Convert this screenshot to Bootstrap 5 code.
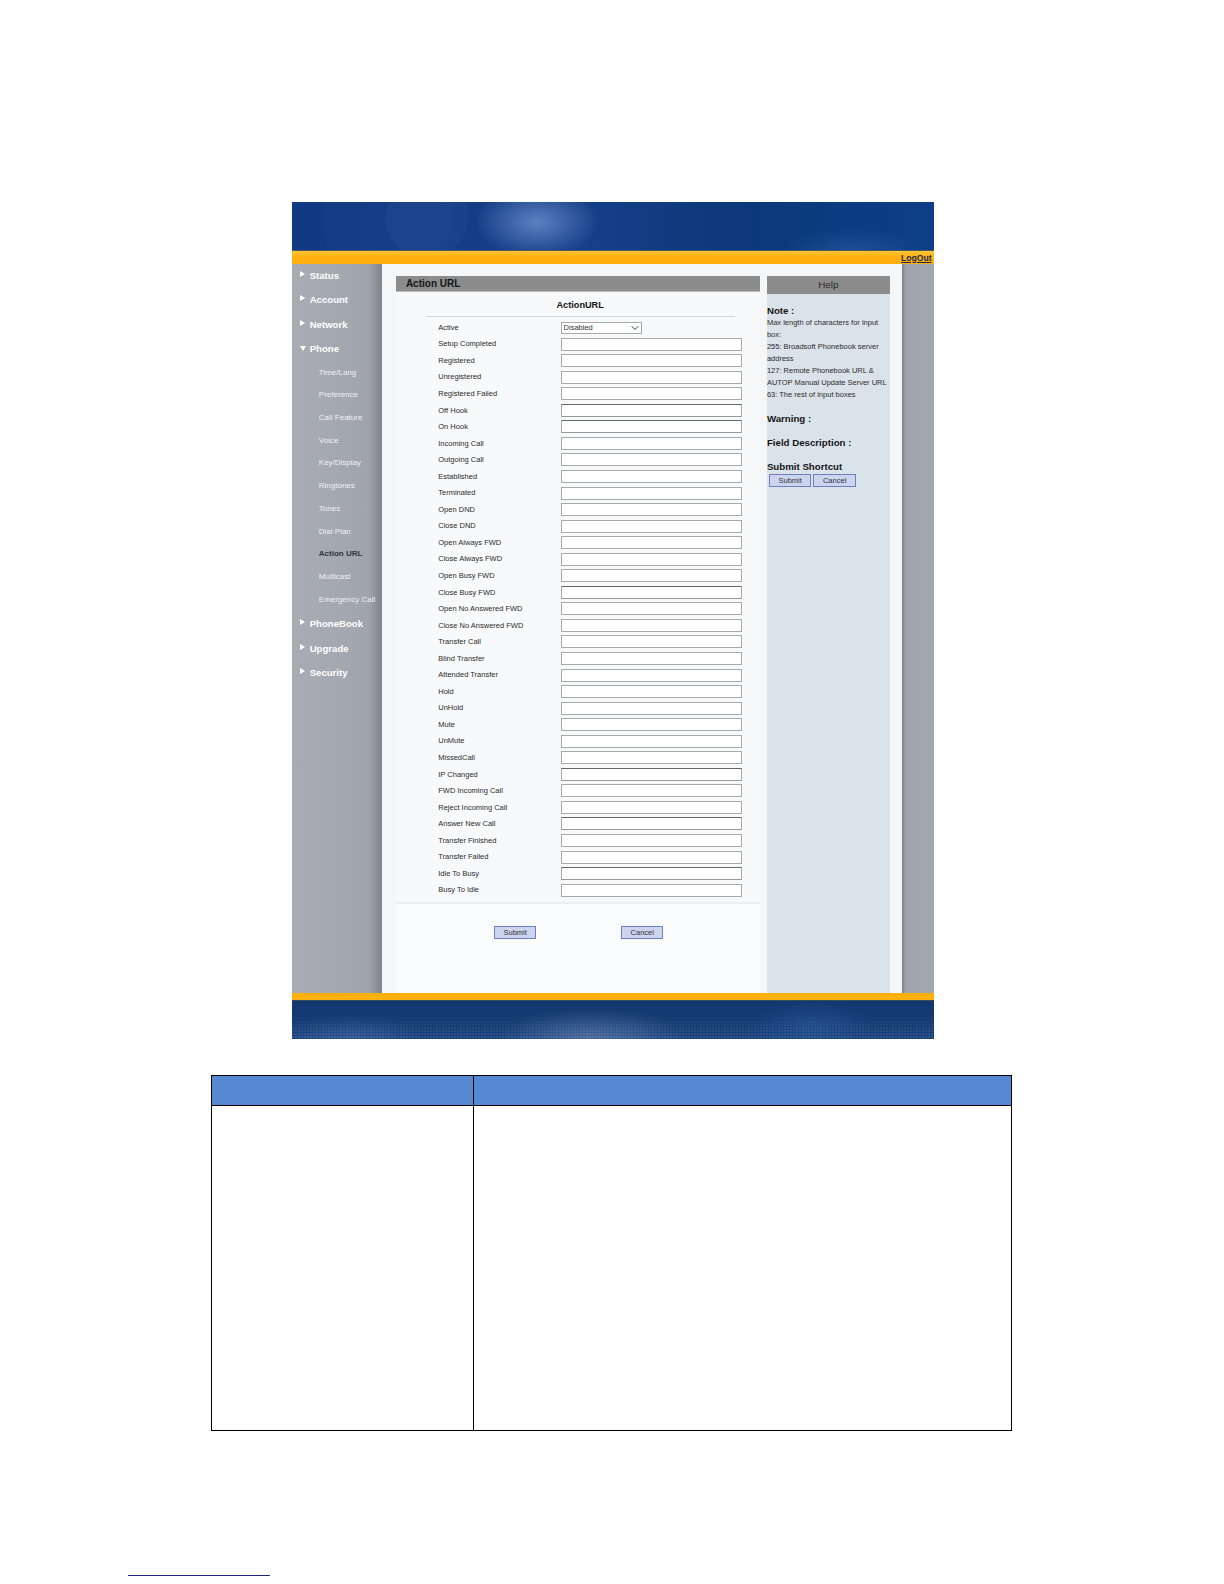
<!DOCTYPE html>
<html lang="en"><head><meta charset="utf-8"><title>Action URL</title>
<link href="https://cdn.jsdelivr.net/npm/bootstrap@5.3.0/dist/css/bootstrap.min.css" rel="stylesheet">
<style>
html,body{height:1584px;background:#fff;overflow:hidden}
.sheet{padding:202px 0 0 291.5px;height:1075px}
.frame{width:642px;height:837px;display:flex;flex-direction:column;font-family:"Liberation Sans",sans-serif;font-size:7.5px;color:#2c2c2c}
.banner{height:48px;flex:none;background:
 radial-gradient(ellipse 62px 36px at 245px 20px,rgba(130,165,225,.65),transparent),
 radial-gradient(circle 42px at 135px 15px,rgba(90,125,190,.08) 97%,transparent),
 radial-gradient(circle 66px at 95px 15px,rgba(50,90,160,.08) 97%,transparent),
 radial-gradient(ellipse 70px 22px at 560px 48px,rgba(70,120,190,.3),transparent),
 linear-gradient(90deg,#123a82,#163f88 45%,#0b3879 72%,#0d3f88);}
.stripe{height:13.5px;flex:none;background:linear-gradient(#ffc53a,#fdb00e 45%);display:flex;justify-content:flex-end;align-items:flex-end;border-top:1px solid #4b5a62}
.stripe a{font:700 8.6px/12px "Liberation Sans",sans-serif;color:#1d2a52;text-decoration:underline;padding-right:2px}
.mid{height:729.5px;flex:none;display:flex}
.sidenav{width:90px;flex:none;padding-top:3px;background:linear-gradient(90deg,#a9adb3,#a0a5ac 85%,#7f8389)}
.sidenav div{position:relative;color:#fff;white-space:nowrap}
.topitem{height:24.55px;line-height:18px;padding-left:18.2px;font-weight:700;font-size:9.6px}
.subitem{height:22.7px;line-height:16.5px;padding-left:27.3px;font-size:8px;color:#eef0f2!important}
.subitem + .topitem{margin-top:1px}
.subitem.on{color:#2d3540!important;font-weight:700}
.tri{position:absolute;left:8px;top:4px;width:0;height:0;border-left:5px solid #fff;border-top:3px solid transparent;border-bottom:3px solid transparent}
.tri.down{left:8px;top:6px;border-top:5px solid #fff;border-left:3px solid transparent;border-right:3px solid transparent;border-bottom:0}
.work{width:520.5px;flex:none;background:#f4f6f8;display:flex;padding:12px 12px 0 14.4px;gap:6.5px}
.rail{width:31.5px;flex:none;background:linear-gradient(90deg,#7d8187,#a0a5ac 12%,#a3a7ae)}
.mainp{width:364.5px;flex:none;background:#fafbfc;display:flex;flex-direction:column}
.ttl{height:16.2px;flex:none;background:#8c8c8c;border-bottom:1px solid #bbb;font-weight:700;font-size:10px;line-height:16px;padding-left:10px;color:#151515}
.formbox{height:612px;flex:none;border-bottom:2px solid #eceef0;background:#f8f9fb;padding-top:6px}
.fhead{text-align:center;font-weight:700;font-size:9.2px;line-height:14px;color:#151515;height:19px;padding-right:1px;margin:0 25px 2.6px 30px;border-bottom:1px solid #d4d8dc}
.frow{height:16.55px;display:flex;align-items:center;padding-left:42.4px}
.frow label{width:122.3px;flex:none;line-height:1}
.frow input{width:181px;height:13px;border:1px solid #a9a9a9;background:#fff;padding:0;border-radius:0;min-height:0;flex:none}
.frow input.dk{border-color:#666 #a9a9a9 #999}
.frow select{width:81px;height:12px;min-height:0;border:1px solid #a9a9a9;border-radius:0;font-size:7.5px;line-height:10px;padding:0 0 0 2px;background-size:10px 8px;background-position:right 1px center;color:#333;font-family:inherit}
.actions{display:flex;padding:22.2px 0 0 98px;gap:84.6px}
.pbtn{width:42.5px;height:13px;padding:0;border:1px solid #6f7fc0;border-radius:0;background:#ccd4f0;font-size:7.5px;line-height:11px;color:#333;font-family:inherit}
.helpp{width:123px;flex:none;background:#dbe3ea;line-height:12px;font-size:7.5px}
.helph{height:18.2px;background:#8c8c8c;text-align:center;font-size:9.9px;line-height:18px;color:#2a2a2a;margin-bottom:11px}
.helpp h6{font:700 9.7px/12px "Liberation Sans",sans-serif;margin:0;color:#151515}
.helpp p{margin:0 0 12px;white-space:nowrap}
.hgap{margin-bottom:12px!important}
.hbtns{display:flex;gap:2px;padding-left:2px;margin-top:1px}
.band{height:7px;flex:none;background:#fdb00e}
.foot{height:39px;flex:none;position:relative;border-top:1px solid #3a4a5a;background:
 radial-gradient(ellipse 95px 32px at 300px 39px,rgba(150,170,210,.4),transparent),
 radial-gradient(ellipse 70px 25px at 60px 39px,rgba(90,130,190,.35),transparent),
 radial-gradient(ellipse 60px 28px at 520px 25px,rgba(60,110,180,.3),transparent),
 linear-gradient(#12376f,#17407a)}
.foot::after{content:"";position:absolute;inset:14px 0 0;background:radial-gradient(circle at 1px 1px,rgba(190,205,230,.22) .6px,transparent 1px) 0 0/3px 3px;-webkit-mask-image:linear-gradient(transparent,#000);mask-image:linear-gradient(transparent,#000)}
.spec{margin:0 0 0 211px;width:801px;height:356px;table-layout:fixed;border-collapse:collapse}
.spec td{border:1px solid #000;padding:0}
.spec .hrow td{height:30px;background:#558ad2}
.spec .w1{width:262px}
.noteline{position:absolute;left:127.5px;top:1575px;width:142.5px;height:1px;background:#1a2a8a}
</style></head>
<body>
<div class="sheet"><div class="frame">
 <div class="banner"></div>
 <div class="stripe"><a href="#">LogOut</a></div>
 <div class="mid">
  <nav class="sidenav">
   <div class="topitem"><span class="tri"></span>Status</div>
   <div class="topitem"><span class="tri"></span>Account</div>
   <div class="topitem"><span class="tri"></span>Network</div>
   <div class="topitem"><span class="tri down"></span>Phone</div>
   <div class="subitem">Time/Lang</div>
   <div class="subitem">Preference</div>
   <div class="subitem">Call Feature</div>
   <div class="subitem">Voice</div>
   <div class="subitem">Key/Display</div>
   <div class="subitem">Ringtones</div>
   <div class="subitem">Tones</div>
   <div class="subitem">Dial Plan</div>
   <div class="subitem on">Action URL</div>
   <div class="subitem">Multicast</div>
   <div class="subitem">Emergency Call</div>
   <div class="topitem"><span class="tri"></span>PhoneBook</div>
   <div class="topitem"><span class="tri"></span>Upgrade</div>
   <div class="topitem"><span class="tri"></span>Security</div>
  </nav>
  <div class="work">
   <div class="mainp">
    <div class="ttl">Action URL</div>
    <div class="formbox">
     <div class="fhead">ActionURL</div>
     <div class="frow"><label>Active</label><select class="form-select"><option>Disabled</option></select></div>
     <div class="frow"><label>Setup Completed</label><input class="form-control"></div>
     <div class="frow"><label>Registered</label><input class="form-control"></div>
     <div class="frow"><label>Unregistered</label><input class="form-control"></div>
     <div class="frow"><label>Registered Failed</label><input class="form-control"></div>
     <div class="frow"><label>Off Hook</label><input class="form-control dk"></div>
     <div class="frow"><label>On Hook</label><input class="form-control dk"></div>
     <div class="frow"><label>Incoming Call</label><input class="form-control"></div>
     <div class="frow"><label>Outgoing Call</label><input class="form-control"></div>
     <div class="frow"><label>Established</label><input class="form-control"></div>
     <div class="frow"><label>Terminated</label><input class="form-control"></div>
     <div class="frow"><label>Open DND</label><input class="form-control"></div>
     <div class="frow"><label>Close DND</label><input class="form-control"></div>
     <div class="frow"><label>Open Always FWD</label><input class="form-control"></div>
     <div class="frow"><label>Close Always FWD</label><input class="form-control"></div>
     <div class="frow"><label>Open Busy FWD</label><input class="form-control"></div>
     <div class="frow"><label>Close Busy FWD</label><input class="form-control dk"></div>
     <div class="frow"><label>Open No Answered FWD</label><input class="form-control"></div>
     <div class="frow"><label>Close No Answered FWD</label><input class="form-control"></div>
     <div class="frow"><label>Transfer Call</label><input class="form-control"></div>
     <div class="frow"><label>Blind Transfer</label><input class="form-control"></div>
     <div class="frow"><label>Attended Transfer</label><input class="form-control"></div>
     <div class="frow"><label>Hold</label><input class="form-control"></div>
     <div class="frow"><label>UnHold</label><input class="form-control"></div>
     <div class="frow"><label>Mute</label><input class="form-control"></div>
     <div class="frow"><label>UnMute</label><input class="form-control"></div>
     <div class="frow"><label>MissedCall</label><input class="form-control"></div>
     <div class="frow"><label>IP Changed</label><input class="form-control dk"></div>
     <div class="frow"><label>FWD Incoming Call</label><input class="form-control"></div>
     <div class="frow"><label>Reject Incoming Call</label><input class="form-control"></div>
     <div class="frow"><label>Answer New Call</label><input class="form-control dk"></div>
     <div class="frow"><label>Transfer Finished</label><input class="form-control"></div>
     <div class="frow"><label>Transfer Failed</label><input class="form-control"></div>
     <div class="frow"><label>Idle To Busy</label><input class="form-control dk"></div>
     <div class="frow"><label>Busy To Idle</label><input class="form-control"></div>
    </div>
    <div class="actions"><button class="btn pbtn">Submit</button><button class="btn pbtn">Cancel</button></div>
   </div>
   <aside class="helpp">
    <div class="helph">Help</div>
    <h6>Note :</h6>
    <p>Max length of characters for input<br>box:<br>255: Broadsoft Phonebook server<br>address<br>127: Remote Phonebook URL &amp;<br>AUTOP Manual Update Server URL<br>63: The rest of input boxes</p>
    <h6 class="hgap">Warning :</h6>
    <h6 class="hgap">Field Description :</h6>
    <h6>Submit Shortcut</h6>
    <div class="hbtns"><button class="btn pbtn">Submit</button><button class="btn pbtn">Cancel</button></div>
   </aside>
  </div>
  <div class="rail"></div>
 </div>
 <div class="band"></div>
 <div class="foot"></div>
</div></div>
<table class="spec"><tr class="hrow"><td class="w1"></td><td></td></tr><tr><td></td><td></td></tr></table>
<div class="noteline"></div>
</body></html>
